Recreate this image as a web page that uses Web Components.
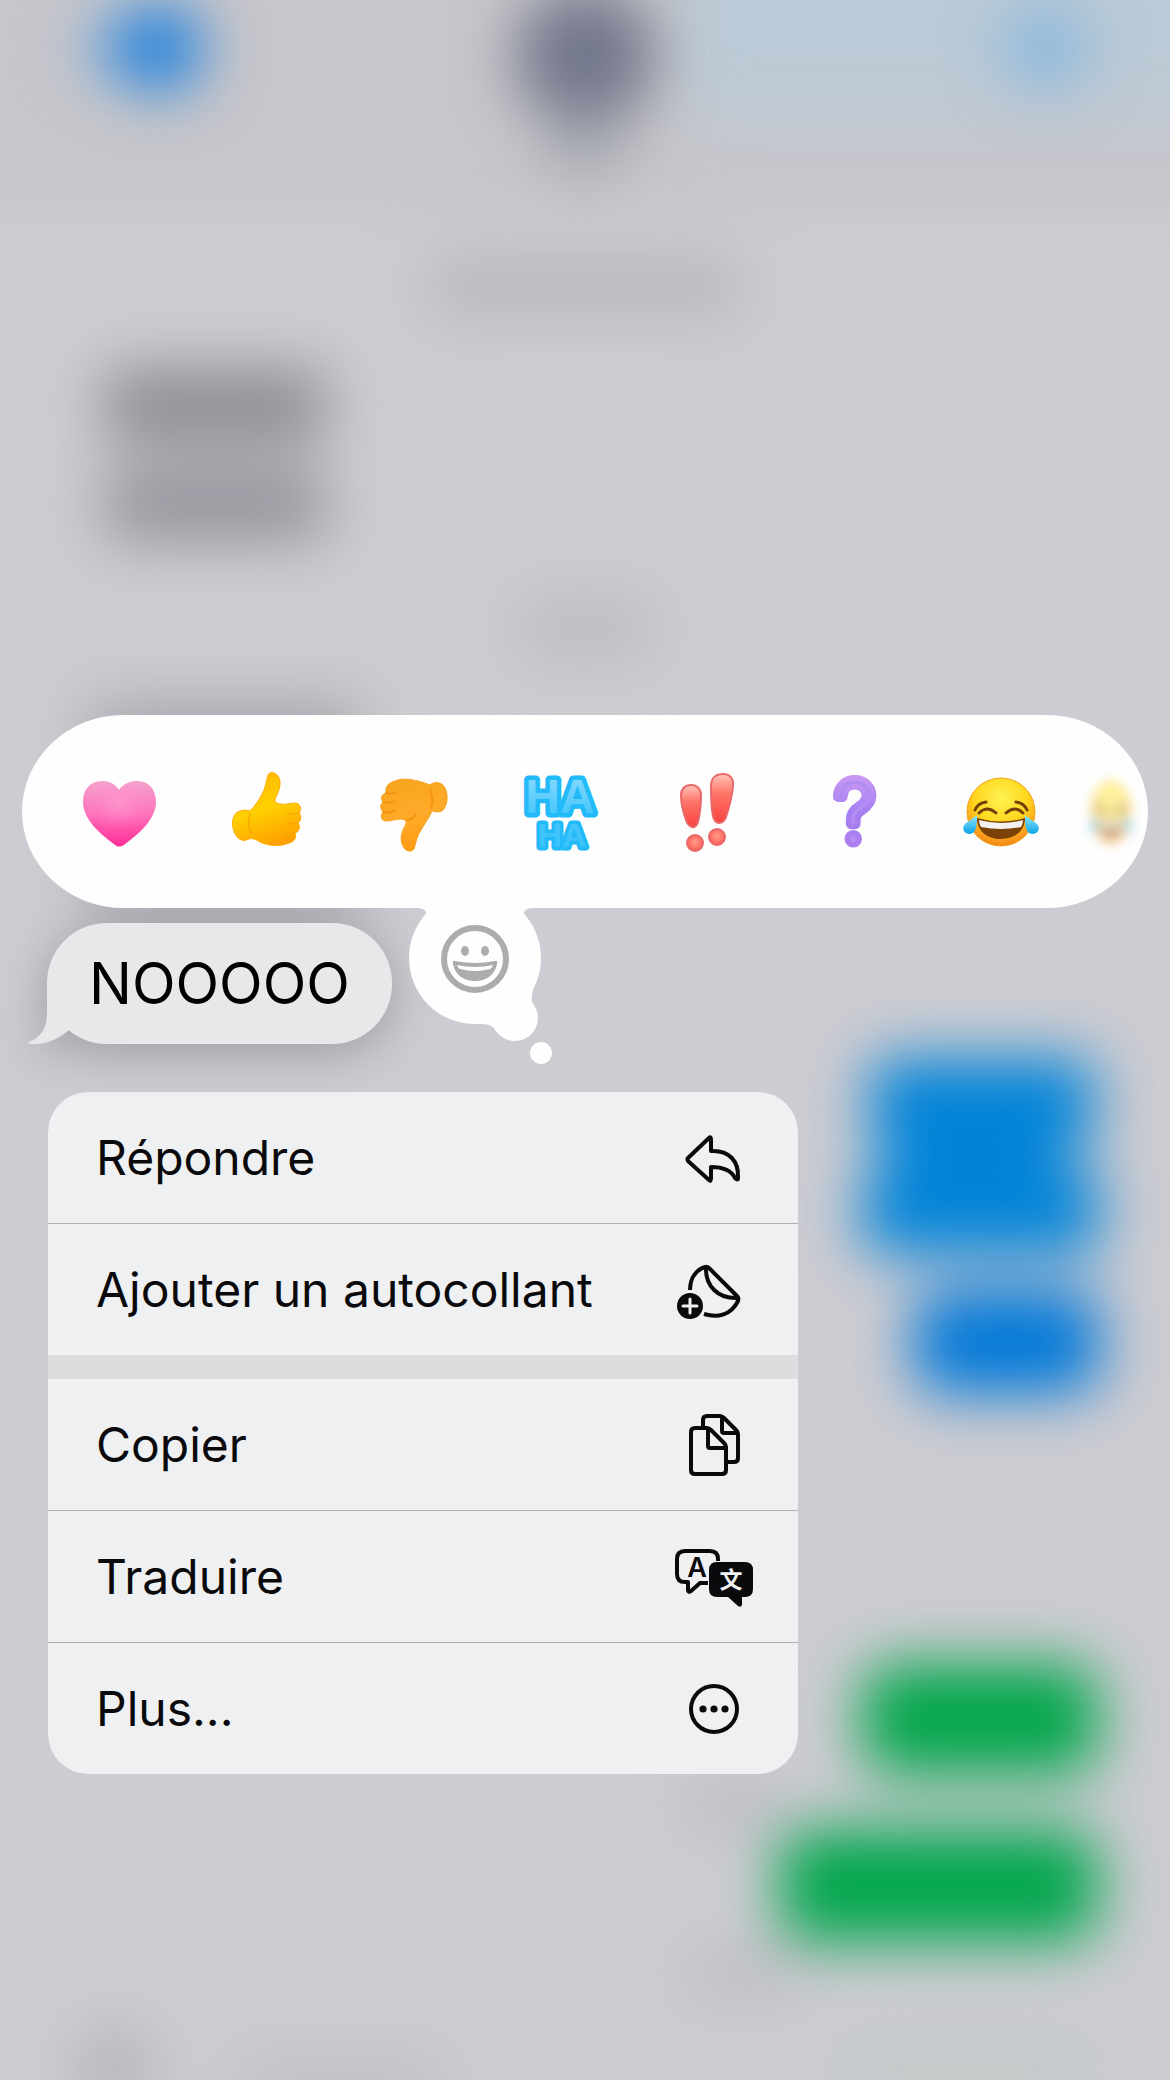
<!DOCTYPE html>
<html lang="fr">
<head>
<meta charset="utf-8">
<meta name="viewport" content="width=device-width, initial-scale=1">
<title>Messages</title>
<style>
    html {
        height: 100%;
    }

    body {
        margin: 0;
        min-height: 100%;
        background: #cdccd2;
        color: #0a0a0c;
        font-family: Inter, "Liberation Sans", sans-serif;
    }
</style>
</head>
<body>
<message-screen>
    <chat-backdrop slot="backdrop"></chat-backdrop>
    <reaction-bar>
        <reaction-item name="heart" label="J’adore"></reaction-item>
        <reaction-item name="up" label="J’aime"></reaction-item>
        <reaction-item name="down" label="Je n’aime pas"></reaction-item>
        <reaction-item name="haha" label="Haha"></reaction-item>
        <reaction-item name="bang" label="Exclamation"></reaction-item>
        <reaction-item name="question" label="Question"></reaction-item>
        <reaction-item name="joy" label="Larmes de joie"></reaction-item>
        <reaction-item name="joy" label="Suivant" faded></reaction-item>
    </reaction-bar>
    <message-bubble>NOOOOO</message-bubble>
    <context-menu>
        <menu-group>
            <menu-item icon="reply">Répondre</menu-item>
            <menu-item icon="sticker">Ajouter un autocollant</menu-item>
        </menu-group>
        <menu-group>
            <menu-item icon="copy">Copier</menu-item>
            <menu-item icon="translate">Traduire</menu-item>
            <menu-item icon="more">Plus...</menu-item>
        </menu-group>
    </context-menu>
</message-screen>

<script>
const REACTIONS = {
    heart: `
<defs>
    <linearGradient id="g" x1="0" y1="0" x2="0" y2="1">
        <stop offset="0" stop-color="#f5a3cd"/><stop offset=".5" stop-color="#ff74bc"/><stop offset="1" stop-color="#ff2493"/>
    </linearGradient>
    <radialGradient id="s" cx=".5" cy=".35" r=".6">
        <stop offset="0" stop-color="#ff9dd2" stop-opacity=".6"/><stop offset=".7" stop-color="#ff86c6" stop-opacity="0"/><stop offset="1" stop-color="#f0409d" stop-opacity=".35"/>
    </radialGradient>
</defs>
<path fill="url(#g)" d="M40 18C36 11 29 9 23 9C11 9 4 18 4 30C4 47 21 62 35 72Q40 77 46 72C60 62 77 47 77 30C77 18 70 9 58 9C52 9 45 11 40 18Z"/>
<path fill="url(#s)" d="M40 18C36 11 29 9 23 9C11 9 4 18 4 30C4 47 21 62 35 72Q40 77 46 72C60 62 77 47 77 30C77 18 70 9 58 9C52 9 45 11 40 18Z"/>`,
    up: `
<defs>
    <linearGradient id="g" x1=".3" y1="0" x2=".6" y2="1">
        <stop offset="0" stop-color="#ffb800"/><stop offset=".5" stop-color="#ffd000"/><stop offset="1" stop-color="#ff9f00"/>
    </linearGradient>
</defs>
<path fill="url(#g)" stroke="#ffad0a" d="M24 39C30 33 35 25 38 18C40 12 41 6 42 3C44-1 49 0 52 4C57 11 52 21 49 27Q48 31 54 32C60 33 64 31 70 31C75 32 76 38 73 41C76 44 75 49 72 51C75 55 73 60 69 61C71 66 68 70 63 71C54 75 42 74 34 70C29 67 26 66 23 67C16 71 9 66 7 56C5 47 9 40 14 39Q19 37 24 39Z"/>
<path fill="none" stroke="#f5a300" stroke-width="2" stroke-linecap="round" d="M24 42Q21 52 25 62M62 41Q67 43 72 41M62 51Q67 53 71 51M59 61Q64 63 68 61" opacity=".6"/>`,
    down: `
<defs>
    <linearGradient id="g" x1=".3" y1="0" x2=".6" y2="1">
        <stop offset="0" stop-color="#f9a521"/><stop offset=".55" stop-color="#ffa928"/><stop offset="1" stop-color="#ff9a12"/>
    </linearGradient>
</defs>
<path fill="url(#g)" stroke="#f5a21c" d="M57 13C62 9 69 10 72 16C76 24 74 35 69 39Q65 41 59 39C56 46 52 51 48 58C44 64 43 70 41 77C38 81 32 79 30 74C26 67 29 59 33 52Q34 48 29 47C23 47 18 49 13 49C8 49 7 43 10 40C7 37 7 32 10 30C7 26 9 22 13 21C12 15 15 11 22 9C30 5 45 8 57 13Z"/>
<path fill="none" stroke="#ef8500" stroke-width="2" stroke-linecap="round" d="M57 17Q61 28 58 36M11 40Q17 42 22 38M11 30Q17 32 22 29M13 21Q18 23 23 20M35 48Q40 47 43 42" opacity=".6"/>`,
    haha: `
<defs>
    <linearGradient id="g" x1="0" y1="0" x2="0" y2="1">
        <stop offset="0" stop-color="#8fdbff"/><stop offset=".5" stop-color="#4ac8fb"/><stop offset="1" stop-color="#36c0fa"/>
    </linearGradient>
</defs>
<text font-family="Liberation Sans, sans-serif" text-anchor="middle" fill="url(#g)" stroke="#22baf8" stroke-linejoin="round" paint-order="stroke"><tspan x="40" y="41" font-size="48" font-weight="700" stroke-width="9">HA</tspan><tspan x="42" y="75" font-size="34" font-weight="700" stroke-width="7">HA</tspan></text>`,
    bang: `
<defs>
    <linearGradient id="g" x1="0" y1="0" x2="0" y2="1">
        <stop offset="0" stop-color="#ffc4b8"/><stop offset=".4" stop-color="#ff7468"/><stop offset="1" stop-color="#f8433f"/>
    </linearGradient>
    <radialGradient id="d" cx=".5" cy=".45" r=".55">
        <stop offset="0" stop-color="#ff9c8a"/><stop offset="1" stop-color="#f95e55"/>
    </radialGradient>
</defs>
<g stroke="#e9686a" stroke-width="2">
    <path fill="url(#g)" d="M14 23C14 17 18 13 24 13C30 13 34 17 34 23C34 34 33 42 31 50Q29 56 25 55Q21 54 19 48C16 40 14 31 14 23Z"/>
    <path fill="url(#g)" d="M44 14C44 6 49 2 56 2C63 2 67 7 66 14C65 25 62 36 59 45Q57 51 52 51Q47 50 46 44C44 34 44 24 44 14Z"/>
    <circle fill="url(#d)" cx="28" cy="71" r="8"/>
    <circle fill="url(#d)" cx="50" cy="65" r="8"/>
</g>`,
    question: `
<defs>
    <linearGradient id="g" x1="0" y1="0" x2="0" y2="1">
        <stop offset="0" stop-color="#d5a4f2"/><stop offset=".5" stop-color="#a580f2"/><stop offset="1" stop-color="#b07df0"/>
    </linearGradient>
</defs>
<text x="41" y="70" font-family="Inter, sans-serif" font-size="83" font-weight="200" text-anchor="middle" fill="#b48df4" stroke="url(#g)" stroke-width="11" stroke-linejoin="round" paint-order="stroke">?</text>`,
    joy: `
<defs>
    <radialGradient id="g" cx=".5" cy=".3" r=".72">
        <stop offset="0" stop-color="#fff352"/><stop offset=".55" stop-color="#ffd51c"/><stop offset=".85" stop-color="#fb9c1b"/><stop offset="1" stop-color="#f0811b"/>
    </radialGradient>
    <linearGradient id="t" x1="0" y1="0" x2="0" y2="1">
        <stop offset="0" stop-color="#8fe9ff"/><stop offset="1" stop-color="#0ba4e8"/>
    </linearGradient>
</defs>
<circle cx="40" cy="40" r="34" fill="url(#g)" stroke="#f2a21b"/>
<path fill="none" stroke="#74400a" stroke-width="3" stroke-linecap="round" d="M14 38Q17 31 25 30M66 38Q63 31 55 30M18 41Q26 33 35 41M45 41Q54 33 62 41"/>
<path fill="#7a4206" d="M16 46Q40 53 64 46C64 59 54 67 40 67C26 67 16 59 16 46Z"/>
<path fill="#f4f2f0" d="M18 48Q40 54 62 48Q62 52 60 55Q40 59 20 55Q18 52 18 48Z"/>
<path fill="url(#t)" d="M16 43C16 52 16 61 9 62C2 62 0 55 5 51C9 48 13 46 16 43ZM64 43C64 52 64 61 71 62C78 62 80 55 75 51C71 48 67 46 64 43Z"/>`,
};

const ICONS = {
    reply: `<path d="M14 40L35 20Q37 18 37 22V33C55 32 65 43 64 60Q64 63 61 60C57 52 49 49 37 49V60Q37 64 35 62L14 43Q13 41 14 40Z"/>`,
    sticker: `
<path d="M16 40C16 28 22 20 31 17Q33 16 35 18L63 46Q65 48 64 51C57 65 44 68 30 64M32 17C31 36 44 49 64 48"/>
<circle class="solid" cx="16" cy="56" r="13"/>
<path class="light" d="M9 56H23M16 49V63"/>`,
    copy: `
<path d="M29 23V15Q29 11 33 11H46Q48 11 50 13L62 25Q64 27 64 29V53Q64 57 60 57H53M48 12V26Q48 28 50 28H63"/>
<path d="M21 23H33Q35 23 37 25L50 38Q52 40 52 42V65Q52 69 48 69H21Q17 69 17 65V27Q17 23 21 23ZM34 24V41Q34 43 36 43H51"/>`,
    translate: `
<path d="M44 24V22Q44 14 36 14H11Q3 14 3 22V37Q3 45 11 45H14V53Q14 56 17 54L26 46H34"/>
<text x="23" y="40" font-size="27" font-weight="600" font-family="Inter, sans-serif">A</text>
<path class="solid" d="M43 25H71Q79 25 79 33V52Q79 60 71 60H68V67Q68 71 64 69L54 60H43Q35 60 35 52V33Q35 25 43 25Z"/>
<text class="han" x="57" y="51" font-size="23" font-weight="700" font-family="Noto Sans CJK SC, sans-serif">文</text>`,
    more: `
<circle cx="40" cy="40" r="23"/>
<circle class="solid" cx="29" cy="40" r="3.600"/><circle class="solid" cx="40" cy="40" r="3.600"/><circle class="solid" cx="51" cy="40" r="3.600"/>`,
};

class MessageScreen extends HTMLElement {
    constructor() {
        super();
        this.attachShadow({mode: 'open'}).innerHTML = `
<style>
    :host {
        display: block;
        position: relative;
        min-height: 100vh;
        overflow: hidden;
    }

    main {
        position: relative; /* above the backdrop */
        display: flex;
        flex-direction: column;
        align-items: flex-start;
        padding: 715px 22px 48px;
    }
</style>
<slot name="backdrop"></slot>
<main><slot></slot></main>`;
    }
}

/* The conversation behind the menu, out of focus */
class ChatBackdrop extends HTMLElement {
    constructor() {
        super();
        this.attachShadow({mode: 'open'}).innerHTML = `
<style>
    :host {
        position: absolute;
        inset: 0;
    }

    svg {
        display: block;
        width: 100%;
        height: 100%;
    }
</style>
<svg viewBox="0 0 1170 2080" preserveAspectRatio="none" aria-hidden="true">
    <defs>
        <linearGradient id="bar" x1="0" y1="0" x2="0" y2="1">
            <stop offset="0" stop-color="#c7c6cb"/><stop offset=".7" stop-color="#c7c6cb"/><stop offset="1" stop-color="#cdccd2"/>
        </linearGradient>
        <filter id="soft" x="-50%" y="-50%" width="200%" height="200%" color-interpolation-filters="sRGB">
            <feGaussianBlur stdDeviation="30"/>
        </filter>
    </defs>
    <rect width="1170" height="2080" fill="#cdccd2"/>
    <rect width="1170" height="250" fill="url(#bar)"/>
    <g filter="url(#soft)">
        <rect x="680" y="-90" width="580" height="200" fill="#bacad6"/>
        <rect x="700" y="90" width="560" height="50" fill="#c1c8d2"/>
    </g>
    <g filter="url(#soft)">
        <ellipse cx="105" cy="48" rx="30" ry="22" fill="#8fb2da"/>
        <rect x="114" y="6" width="88" height="84" rx="36" fill="#1c80dc"/>
        <circle cx="585" cy="56" r="70" fill="#72768a"/>
        <rect x="548" y="114" width="74" height="60" fill="#a5a7af"/>
        <circle cx="1045" cy="48" r="38" fill="#84b4de"/>
        <rect x="430" y="256" width="310" height="60" fill="#b8b7bd"/>
        <rect x="104" y="370" width="222" height="68" rx="16" fill="#8b8a91"/>
        <rect x="108" y="438" width="214" height="36" fill="#bebdc3"/>
        <rect x="104" y="474" width="222" height="66" rx="16" fill="#93929a"/>
        <rect x="520" y="600" width="130" height="56" fill="#bbbac0"/>
        <rect x="90" y="704" width="270" height="210" fill="#a5a4ab"/>
        <rect x="870" y="1058" width="224" height="90" rx="20" fill="#0083d8"/>
        <rect x="890" y="1110" width="170" height="90" fill="#0083d8"/>
        <rect x="862" y="1168" width="238" height="86" rx="20" fill="#0083d8"/>
        <rect x="914" y="1290" width="186" height="104" rx="30" fill="#0078d8"/>
        <rect x="690" y="1785" width="90" height="38" fill="#b9b8be"/>
        <rect x="690" y="1955" width="110" height="38" fill="#bab9bf"/>
        <rect x="862" y="1664" width="236" height="110" rx="30" fill="#00a64a"/>
        <rect x="780" y="1830" width="318" height="112" rx="30" fill="#00a64c"/>
        <rect x="840" y="2040" width="250" height="60" fill="#c1cac8"/>
        <circle cx="115" cy="2068" r="38" fill="#b2b1b8"/>
        <rect x="240" y="2060" width="200" height="50" fill="#bebdc3"/>
    </g>
</svg>`;
    }
}

class ReactionBar extends HTMLElement {
    constructor() {
        super();
        this.attachShadow({mode: 'open'}).innerHTML = `
<style>
    :host {
        display: block;
        position: relative;
        z-index: 1; /* keeps the message shadow off the thought bubble */
        align-self: stretch;
    }

    .pill {
        display: flex;
        align-items: center;
        height: 193px;
        box-sizing: border-box;
        padding-left: 24px;
        border-radius: 102px / 97px;
        background: #fefefe;
    }

    /* Thought bubble hanging under the pill */
    button {
        position: absolute;
        left: 378px;
        top: 190px;
        padding: 0;
        border: 0;
        background: none;
        line-height: 0;
    }
</style>
<div class="pill"><slot></slot></div>
<button type="button" aria-label="Autres emojis">
    <svg width="160" height="164" viewBox="0 0 160 164">
        <g fill="#fefefe">
            <path d="M18 0V3Q29 4 25 12L75 50L125 12Q121 4 132 3V0Z"/>
            <circle cx="75" cy="53" r="66"/>
            <circle cx="115" cy="113" r="23"/>
            <path d="M80 119Q92 118 96 126L115 113L137 106Q129 98 133 85L110 70Z"/>
            <circle cx="141" cy="148" r="11"/>
        </g>
        <circle cx="75" cy="54" r="31" fill="none" stroke="#acacac" stroke-width="6"/>
        <g fill="#acacac">
            <ellipse cx="65" cy="46" rx="4" ry="5"/>
            <ellipse cx="85" cy="46" rx="4" ry="5"/>
            <path fill-rule="evenodd" d="M55 56Q75 60 95 56Q98 55 97 59C95 70 86 76 75 76C64 76 55 70 53 59Q52 55 55 56ZM57 60Q58 63 60 64Q75 68 90 64Q92 63 93 60Q75 64 57 60Z"/>
        </g>
    </svg>
</button>`;
    }
}

class ReactionItem extends HTMLElement {
    constructor() {
        super();
        this.attachShadow({mode: 'open'});
    }

    connectedCallback() {
        this.shadowRoot.innerHTML = `
<style>
    :host {
        display: flex;
        flex: 2;
        min-width: 0;
        justify-content: center;
    }

    :host([faded]) {
        flex: 1;
    }

    button {
        padding: 0;
        border: 0;
        background: none;
        line-height: 0;
    }

    svg {
        overflow: visible;
    }

    :host([faded]) svg {
        width: 46px;
        height: 74px;
        filter: blur(6px);
        opacity: 0.5;
    }
</style>
<button type="button" aria-label="${this.getAttribute('label')}">
    <svg width="80" height="80" viewBox="0 0 80 80" ${this.hasAttribute('faded') ? 'preserveAspectRatio="none"' : ''}>${REACTIONS[this.getAttribute('name')]}</svg>
</button>`;
    }
}

class MessageBubble extends HTMLElement {
    constructor() {
        super();
        this.attachShadow({mode: 'open'}).innerHTML = `
<style>
    :host {
        display: block;
        position: relative;
        margin: 15px 0 0 25px;
        padding: 0 42px;
        border-radius: 60px;
        background: #e8e8eb;
        color: #000;
        font-size: 57px;
        line-height: 121px;
        filter: drop-shadow(0 8px 24px rgba(0, 0, 0, 0.24));
    }

    svg {
        position: absolute;
        left: -20px;
        bottom: 0;
    }
</style>
<svg width="60" height="61" viewBox="0 0 60 61" aria-hidden="true">
    <path fill="#e8e8eb" d="M20 0V30C20 46 13 55 2 59Q0 61 3 61C20 62 33 55 42 47L60 20V0Z"/>
</svg>
<slot></slot>`;
    }
}

class ContextMenu extends HTMLElement {
    constructor() {
        super();
        this.attachShadow({mode: 'open'}).innerHTML = `
<style>
    :host {
        display: block;
        width: 750px;
        max-width: 100%;
        margin: 48px 0 0 26px;
    }

    nav {
        display: flex;
        flex-direction: column;
        gap: 24px;
        overflow: hidden;
        border-radius: 40px;
        background: #dcdddf;
    }
</style>
<nav><slot></slot></nav>`;
    }
}

class MenuGroup extends HTMLElement {
    constructor() {
        super();
        this.attachShadow({mode: 'open'}).innerHTML = `
<style>
    :host {
        display: flex;
        flex-direction: column;
        gap: 1px; /* hairline between rows */
        background: #b0b0b4;
    }
</style>
<slot></slot>`;
    }
}

class MenuItem extends HTMLElement {
    constructor() {
        super();
        this.attachShadow({mode: 'open'});
    }

    connectedCallback() {
        this.shadowRoot.innerHTML = `
<style>
    :host {
        display: block;
    }

    button {
        display: flex;
        align-items: center;
        justify-content: space-between;
        width: 100%;
        height: 131px;
        padding: 0 44px 0 48px;
        border: 0;
        background: #eff0f2;
        color: inherit;
        font: inherit;
        font-size: 48px;
        line-height: 64px;
        text-align: left;
    }

    svg {
        flex: none;
        fill: none;
        stroke: #0a0a0c;
        stroke-width: 4;
        stroke-linecap: butt;
        stroke-linejoin: round;
    }

    .solid {
        fill: #0a0a0c;
        stroke: none;
    }

    .light {
        stroke: #eff0f2;
        stroke-width: 3;
        stroke-linecap: round;
    }

    text {
        fill: #0a0a0c;
        stroke: none;
        text-anchor: middle;
    }

    .han {
        fill: #eff0f2;
    }
</style>
<button type="button">
    <span><slot></slot></span>
    <svg width="80" height="80" viewBox="0 0 80 80" aria-hidden="true">${ICONS[this.getAttribute('icon')]}</svg>
</button>`;
    }
}

customElements.define('message-screen', MessageScreen);
customElements.define('chat-backdrop', ChatBackdrop);
customElements.define('reaction-bar', ReactionBar);
customElements.define('reaction-item', ReactionItem);
customElements.define('message-bubble', MessageBubble);
customElements.define('context-menu', ContextMenu);
customElements.define('menu-group', MenuGroup);
customElements.define('menu-item', MenuItem);
</script>
</body>
</html>
